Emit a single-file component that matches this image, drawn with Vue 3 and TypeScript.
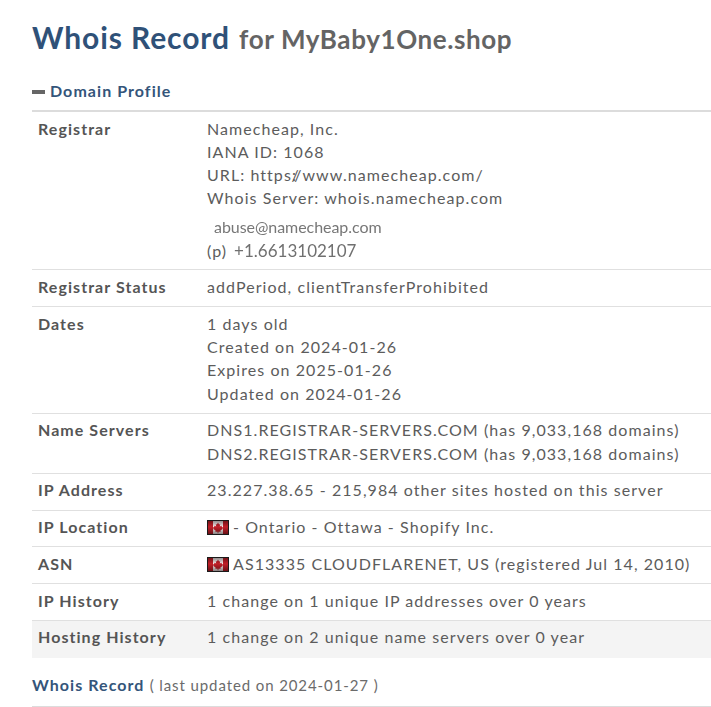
<script setup lang="ts">
interface Row { label: string; lines: string[]; flag?: boolean; hl?: boolean }
const rows: Row[] = [
  { label: 'Registrar Status', lines: ['addPeriod, clientTransferProhibited'] },
  { label: 'Dates', lines: ['1 days old', 'Created on 2024-01-26', 'Expires on 2025-01-26', 'Updated on 2024-01-26'] },
  { label: 'Name Servers', lines: ['DNS1.REGISTRAR-SERVERS.COM (has 9,033,168 domains)', 'DNS2.REGISTRAR-SERVERS.COM (has 9,033,168 domains)'] },
  { label: 'IP Address', lines: ['23.227.38.65 - 215,984 other sites hosted on this server'] },
  { label: 'IP Location', flag: true, lines: ['- Ontario - Ottawa - Shopify Inc.'] },
  { label: 'ASN', flag: true, lines: ['AS13335 CLOUDFLARENET, US (registered Jul 14, 2010)'] },
  { label: 'IP History', lines: ['1 change on 1 unique IP addresses over 0 years'] },
  { label: 'Hosting History', lines: ['1 change on 2 unique name servers over 0 year'], hl: true },
]
</script>

<template>
  <main class="page">
    <h1 class="title"><span class="brand">Whois Record</span> <small>for MyBaby1One.shop</small></h1>
    <h2 class="section"><span class="dash"></span>Domain Profile</h2>
    <section class="table">
      <div class="row first">
        <div class="label">Registrar</div>
        <div class="value">
          <div>Namecheap, Inc.</div>
          <div>IANA ID: 1068</div>
          <div>URL: https<span class="slashes">:/</span>/www.namecheap.com/</div>
          <div>Whois Server: whois.namecheap.com</div>
          <div class="email">abuse@namecheap.com</div>
          <div class="phone"><span>(p)</span><span class="num">+1.6613102107</span></div>
        </div>
      </div>
      <div v-for="r in rows" :key="r.label" class="row" :class="{ hl: r.hl }">
        <div class="label">{{ r.label }}</div>
        <div class="value">
          <div v-for="l in r.lines" :key="l" class="line">
            <svg v-if="r.flag" class="flag" width="22" height="15" viewBox="0 0 22 15" aria-hidden="true">
              <defs>
                <linearGradient id="shade" x1="0" y1="0" x2="0" y2="1">
                  <stop offset="0" stop-color="#000" stop-opacity=".4" />
                  <stop offset=".45" stop-color="#000" stop-opacity="0" />
                  <stop offset="1" stop-color="#000" stop-opacity=".45" />
                </linearGradient>
              </defs>
              <rect width="22" height="15" fill="#1a1a1a" />
              <rect x="1" y="1" width="20" height="13" fill="#f6eaea" />
              <rect x="1" y="1" width="5" height="13" fill="#c21f28" />
              <rect x="16" y="1" width="5" height="13" fill="#c21f28" />
              <path d="M11 2.500l1.100 2.100 1.100-.6-.4 2.600 1.700-.8.400 1.200 1-.1-.5 1.400.6.500-2.600 1.800.3 1.100h-2.300v1.500h-.8v-1.500H8.300l.3-1.100L6 8.800l.6-.5-.5-1.400 1 .1.4-1.200 1.700.8-.4-2.600 1.100.6z" fill="#c21f28" />
              <rect x="1" y="1" width="20" height="13" fill="url(#shade)" />
            </svg>
            <span>{{ l }}</span>
          </div>
        </div>
      </div>
    </section>
    <h3 class="record"><span class="brand">Whois Record</span> <span class="muted">( last updated on 2024-01-27 )</span></h3>
    <div class="rule"></div>
  </main>
</template>

<style>
html, body { margin: 0; background: #fff; }
</style>

<style scoped>
.page {
  padding: 0 0 0 32px;
  font-family: Lato, sans-serif;
  color: #5c5c5c;
  font-size: 16px;
  letter-spacing: 1.06px;
  height: 707px;
  overflow: hidden;
  box-sizing: border-box;
}
.title {
  margin: 0;
  padding-top: 17px;
  height: 57px;
  box-sizing: border-box;
  font-size: 30px;
  line-height: 40px;
  font-weight: 700;
  letter-spacing: 0.9px;
}
.title .brand { color: #2f5178; margin-right: 1px; }
.title small { font-size: 26px; color: #646464; letter-spacing: 0.6px; }
.section {
  margin: 0;
  padding-bottom: 7px;
  height: 55px;
  box-sizing: border-box;
  display: flex;
  align-items: flex-end;
  font-size: 16px;
  line-height: 24px;
  font-weight: 700;
  color: #34557a;
  border-bottom: 2px solid #dcdcdc;
}
.dash { width: 13px; height: 4px; background: #666; margin: 0 5px 9px 0; }
.row {
  display: grid;
  grid-template-columns: 169px 1fr;
  line-height: 23.3px;
  padding: 4.6px 0 7.85px 6px;
  border-bottom: 1px solid #e0e0e0;
}
.row.first { padding-bottom: 7px; }
.row.hl { background: #f4f4f4; border-bottom: none; padding-bottom: 9px; }
.label { font-weight: 700; color: #555; }
.line { display: flex; align-items: center; white-space: nowrap; }
.flag { margin: 2px 4px 0 0; flex: none; filter: blur(0.25px); }
.slashes { letter-spacing: -4.5px; }
.email {
  padding-left: 7px;
  margin-top: 5px;
  font-size: 16px;
  letter-spacing: -0.05px;
  color: #777;
  filter: blur(0.4px);
}
.phone { display: flex; gap: 7px; margin-top: 1px; }
.phone .num { font-size: 17px; letter-spacing: 0; color: #707070; filter: blur(0.3px); }
.record {
  margin: 0;
  padding-top: 15.5px;
  font-size: 16px;
  line-height: 24px;
  font-weight: 400;
}
.record .brand { font-weight: 700; color: #34557a; }
.muted { color: #6b6b6b; font-size: 15px; letter-spacing: 0.9px; }
.rule { margin-top: 9px; height: 2px; background: #dcdcdc; }
</style>
